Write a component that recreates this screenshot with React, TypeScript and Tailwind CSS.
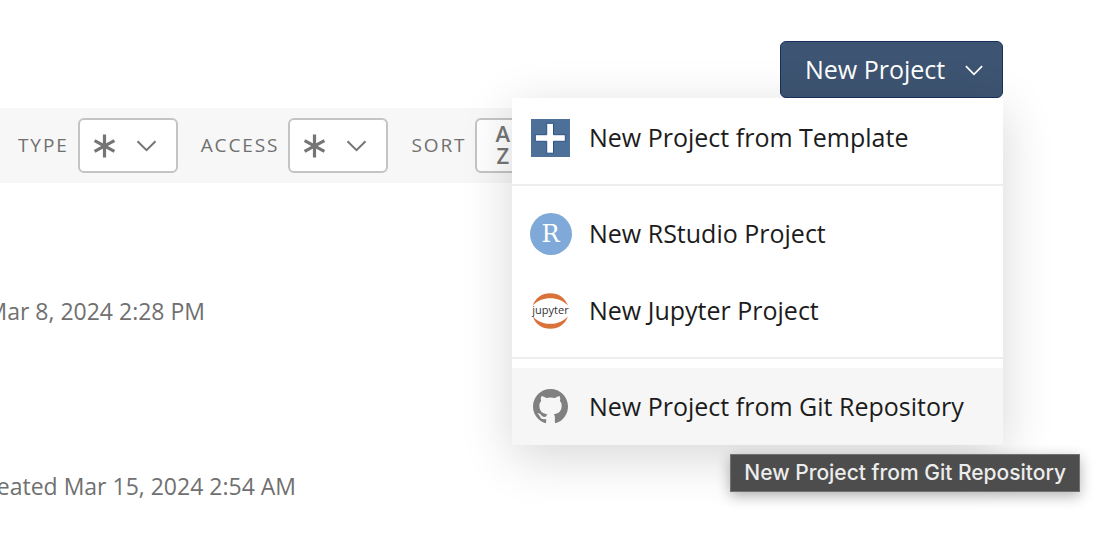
import type { ReactNode } from "react";

function Chevron({ className }: { className: string }) {
  return (
    <svg viewBox="0 0 20 12" className={className} fill="none" stroke="currentColor" strokeWidth="2" aria-hidden="true">
      <path d="M1 1.2 10 10.2 19 1.2" />
    </svg>
  );
}

function Asterisk() {
  return (
    <svg viewBox="0 0 23 24" className="h-6 w-[23px]" fill="none" stroke="currentColor" strokeWidth="3.2" aria-hidden="true">
      <path d="M11.500 .6v22.800M1.600 6.600l19.800 10.800M21.400 6.600 1.600 17.400" />
    </svg>
  );
}

function Filter({ id, label, children }: { id: string; label: string; children: ReactNode }) {
  return (
    <div className="flex items-center gap-[9px]">
      <label htmlFor={id} className="pb-0.5 text-[19px] leading-6 tracking-widest text-[#707070]">
        {label}
      </label>
      <button
        id={id}
        type="button"
        className="flex h-[55px] w-[100px] items-center gap-5 rounded-md border-2 border-[#c4c4c4] bg-white pl-[13px] text-[#757575]"
      >
        {children}
        <Chevron className="h-3 w-[21px]" />
      </button>
    </div>
  );
}

function TemplateIcon() {
  return (
    <svg viewBox="0 0 39 38" className="h-[38px] w-[39px]" aria-hidden="true">
      <path fill="#4d7099" d="M0 0h39v38H0z" />
      <path fill="#fff" stroke="#2a5282" strokeWidth="1" d="M15.7 4.3h6.8v11.4h11.8v6.6H22.5v11.9h-6.8V22.3H4.3v-6.6h11.4z" />
    </svg>
  );
}

function RStudioIcon() {
  return (
    <span className="flex size-[42px] items-center justify-center rounded-full bg-[#7fa9d8] font-['DejaVu_Serif',serif] text-[24px] leading-none text-white">
      R
    </span>
  );
}

function JupyterIcon() {
  return (
    <span className="relative flex h-9 w-[39px] items-center justify-center">
      <svg viewBox="0 0 39 36" className="absolute inset-0 size-full" fill="#d9733a" aria-hidden="true">
        <path d="M1.8 12.6C4.3 4.9 11 .3 19.3 .3s15 4.6 17.5 12.3C32 7.5 26.3 5.300 19.3 5.300S6.6 7.5 1.8 12.6z" />
        <path d="M1.8 23.4C4.3 31.1 11 35.7 19.3 35.7s15-4.6 17.5-12.3C32 28.500 26.3 30.700 19.3 30.700S6.6 28.500 1.8 23.4z" />
      </svg>
      <span className="relative pb-0.5 text-[11px] leading-none font-medium text-[#333]">jupyter</span>
    </span>
  );
}

function GitHubIcon() {
  return (
    <svg viewBox="0 0 16 16" className="size-[35px]" fill="#808080" aria-hidden="true">
      <path d="M8 0C3.580 0 0 3.580 0 8c0 3.540 2.290 6.530 5.470 7.590.4.070.55-.17.55-.38 0-.19-.01-.82-.01-1.490-2.010.37-2.530-.49-2.690-.94-.09-.23-.48-.94-.82-1.130-.28-.15-.68-.52-.01-.53.63-.01 1.080.58 1.230.82.72 1.210 1.870.87 2.330.66.07-.52.28-.87.51-1.070-1.780-.2-3.640-.89-3.640-3.950 0-.87.31-1.590.82-2.150-.08-.2-.36-1.020.08-2.120 0 0 .67-.21 2.200.82.64-.18 1.320-.27 2-.27s1.360.09 2 .27c1.530-1.040 2.200-.82 2.200-.82.44 1.100.16 1.920.08 2.120.51.56.82 1.270.82 2.150 0 3.070-1.870 3.750-3.650 3.950.29.25.54.73.54 1.480 0 1.070-.01 1.930-.01 2.200 0 .21.15.46.55.38A8.010 8.010 0 0 0 16 8c0-4.420-3.580-8-8-8z" />
    </svg>
  );
}

function MenuItem({ icon, label, active = false }: { icon: ReactNode; label: string; active?: boolean }) {
  return (
    <button
      type="button"
      role="menuitem"
      className={
        active
          ? "flex h-[77px] w-full items-center gap-[17px] bg-[#f6f6f6] pl-[17px] text-left"
          : "flex h-[77px] w-full items-center gap-[17px] pl-[17px] text-left"
      }
    >
      <span className="flex w-[43px] shrink-0 justify-center">{icon}</span>
      <span className="pb-0.5 whitespace-nowrap">{label}</span>
    </button>
  );
}

function Separator() {
  return <div role="separator" className="mt-2 mb-[9px] h-0.5 bg-[#eee]" />;
}

export default function App() {
  return (
    <div className="overflow-hidden bg-white font-['Open_Sans',sans-serif]">
      <header className="flex justify-end pt-[41px] pr-[93px]">
        <div className="relative z-10">
          <button
            type="button"
            aria-haspopup="menu"
            aria-expanded="true"
            className="flex h-[57px] w-[223px] items-center justify-between rounded-md border border-[#17305c] bg-[#3d5472] pr-[19px] pl-6 text-[25px] leading-8 text-white"
          >
            <span className="pb-0.5">New Project</span>
            <Chevron className="mt-0.5 h-[11px] w-[18px]" />
          </button>
          <div
            role="menu"
            className="absolute top-full right-0 w-[491px] bg-white pt-px text-[25px] leading-8 text-[#1c1c1c] shadow-[0_12px_48px_rgba(0,0,0,0.16)]"
          >
            <MenuItem icon={<TemplateIcon />} label="New Project from Template" />
            <Separator />
            <MenuItem icon={<RStudioIcon />} label="New RStudio Project" />
            <MenuItem icon={<JupyterIcon />} label="New Jupyter Project" />
            <Separator />
            <MenuItem icon={<GitHubIcon />} label="New Project from Git Repository" active />
            <div
              role="tooltip"
              className="absolute top-full -right-[77px] mt-[9px] border border-[#717171] bg-[#4d4d4d] px-[13px] py-[5px] font-['Inter',sans-serif] text-[21px] leading-[26px] font-medium whitespace-nowrap text-[#ececec] shadow-[0_4px_14px_rgba(0,0,0,0.3)]"
            >
              New Project from Git Repository
            </div>
          </div>
        </div>
      </header>

      <section className="mt-[10px] mr-[93px] flex h-[75px] items-center gap-[23px] bg-[#f7f7f7] pl-[18px]">
        <Filter id="type" label="TYPE">
          <Asterisk />
        </Filter>
        <Filter id="access" label="ACCESS">
          <Asterisk />
        </Filter>
        <Filter id="sort" label="SORT">
          <span className="pb-1 pl-[5px] text-[22px] leading-[22px] font-semibold">
            A<br />Z
          </span>
        </Filter>
      </section>

      <main className="pt-[41px] text-[23px] leading-[35px] whitespace-nowrap text-[#707070]">
        <div className="flex h-[175px] w-[205px] items-center justify-end">
          <time>Mar 8, 2024 2:28 PM</time>
        </div>
        <div className="flex h-[175px] w-[296px] items-center justify-end">
          <span>Created Mar 15, 2024 2:54 AM</span>
        </div>
      </main>
    </div>
  );
}
